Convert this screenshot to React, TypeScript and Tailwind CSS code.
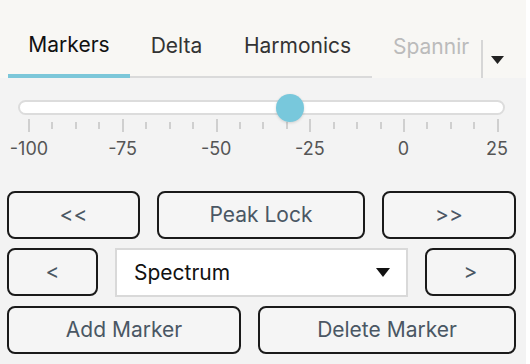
import React from "react";

const font = { fontFamily: "Inter, 'Noto Sans', sans-serif" };

function Btn({ label, w }: { label: string; w: string }) {
  return (
    <button
      className={`${w} h-[48px] rounded-[8px] border-2 border-[#1a1a1a] bg-[#f5f5f5] text-[21px] text-[#4a5764] flex items-center justify-center`}
    >
      {label}
    </button>
  );
}

export default function App() {
  const ticks = Array.from({ length: 21 }, (_, i) => i);
  const labels = ["-100", "-75", "-50", "-25", "0", "25"];
  return (
    <div className="w-[530px] h-[364px] bg-white flex overflow-hidden" style={font}>
      <div className="w-[526px] h-full bg-[#f3f3f3] flex flex-col">
        {/* Tab bar */}
        <div className="h-[78px] bg-[#f8f7f4] flex items-end pl-[8px]">
          <div className="w-[122px] h-full flex flex-col">
            <div className="flex-1 flex items-center justify-center pt-[16px] text-[21px] text-[#111]">Markers</div>
            <div className="h-[4px] bg-[#7cc7d9]" />
          </div>
          <div className="w-[80px] h-full flex flex-col">
            <div className="flex-1 flex items-center justify-center pt-[16px] pl-[13px] text-[21px] text-[#333]">Delta</div>
            <div className="h-[2px] bg-[#dadada]" />
          </div>
          <div className="w-[162px] h-full flex flex-col">
            <div className="flex-1 flex items-center justify-center pt-[16px] pl-[13px] text-[21px] text-[#333]">Harmonics</div>
            <div className="h-[2px] bg-[#dadada]" />
          </div>
          <div className="w-[100px] h-full flex flex-col overflow-hidden">
            <div className="flex-1 flex items-center pt-[16px] pl-[21px] text-[21px] text-[#bbbbbb] whitespace-nowrap">
              <span className="block w-[79px] overflow-hidden">Spannir</span>
            </div>
          </div>
          <div className="w-[2px] h-[38px] bg-[#d6d6d6] ml-[9px]" />
          <div className="h-full flex items-start pt-[56px] ml-[8px]">
            <svg width="13" height="8" viewBox="0 0 13 8">
              <path d="M0 0 L13 0 L6.5 8 Z" fill="#222" />
            </svg>
          </div>
        </div>

        {/* Slider */}
        <div className="relative h-[37px] pt-[22px] pl-[18px]">
          <div className="w-[487px] h-[15px] rounded-full bg-white border-2 border-[#dcdcdc]" />
          <div className="absolute left-[276px] top-[16px] w-[28px] h-[28px] rounded-full bg-[#78c8dc] shadow-[0_1px_3px_rgba(0,0,0,0.15)]" />
        </div>
        <div className="mt-[4px] ml-[28px] w-[471px] h-[13px] flex justify-between items-center">
          {ticks.map((i) => (
            <div
              key={i}
              className={i % 4 === 0 ? "w-[2px] h-[13px] bg-[#cfcfcf]" : "w-[2px] h-[7px] bg-[#cfcfcf]"}
            />
          ))}
        </div>
        <div className="mt-[5px] ml-[5px] w-[516px] flex justify-between text-[18px] leading-[24px] text-[#555]">
          {labels.map((l) => (
            <div key={l} className="w-[48px] text-center">
              {l}
            </div>
          ))}
        </div>

        {/* Buttons */}
        <div className="mt-[30px] pl-[7px] flex flex-col gap-[9px]">
          <div className="flex gap-[17px]">
            <Btn label="<<" w="w-[133px]" />
            <Btn label="Peak Lock" w="w-[208px]" />
            <Btn label=">>" w="w-[134px]" />
          </div>
          <div className="flex gap-[17px]">
            <Btn label="<" w="w-[91px]" />
            <div className="w-[293px] h-[49px] border-2 border-[#d9d9d9] bg-white flex items-center justify-between pl-[17px] pr-[16px] text-[21px] text-[#111]">
              <span>Spectrum</span>
              <svg width="14" height="9" viewBox="0 0 14 9">
                <path d="M0 0 L14 0 L7 9 Z" fill="#111" />
              </svg>
            </div>
            <Btn label=">" w="w-[91px]" />
          </div>
          <div className="flex gap-[17px]">
            <Btn label="Add Marker" w="w-[234px]" />
            <Btn label="Delete Marker" w="w-[258px]" />
          </div>
        </div>
      </div>
    </div>
  );
}
